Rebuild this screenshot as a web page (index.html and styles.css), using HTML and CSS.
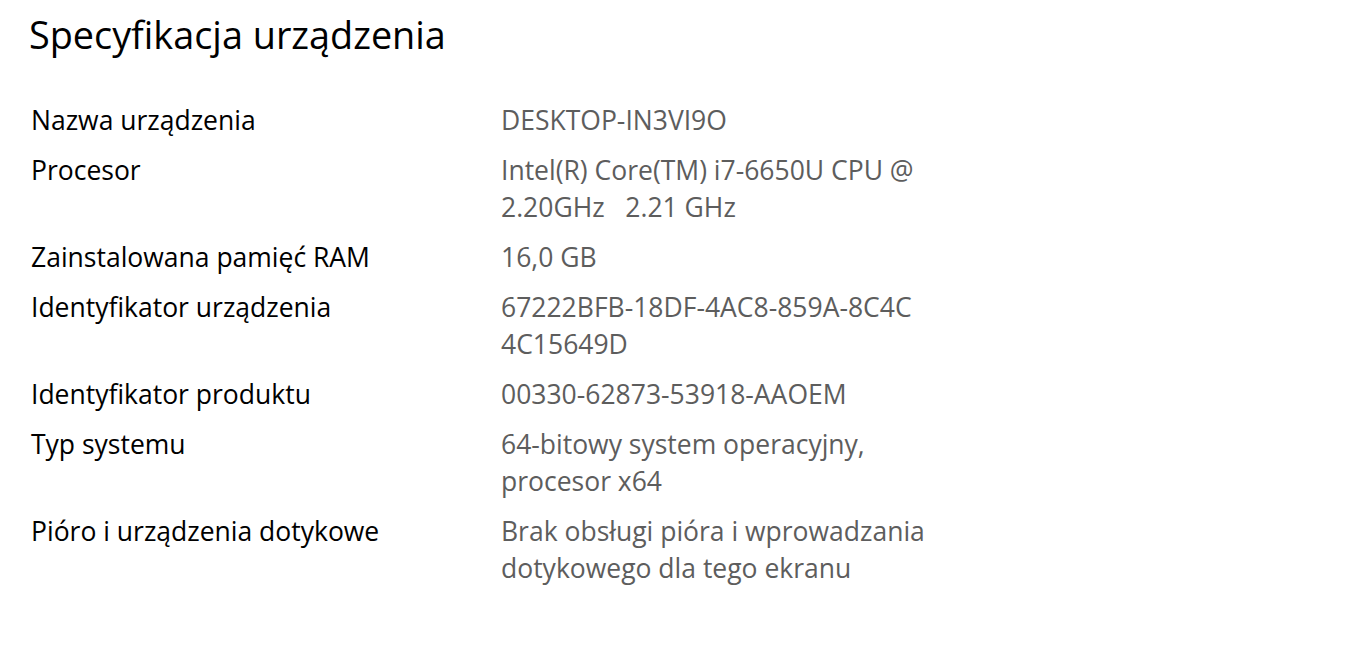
FILE: index.html
```html
<!DOCTYPE html>
<html lang="pl">
<head>
    <meta charset="UTF-8">
    <title>Specyfikacja urządzenia</title>
    <link rel="stylesheet" href="styles.css">
</head>
<body>
    <h1 class="title">Specyfikacja urządzenia</h1>

    <div class="specs">
        <div class="label">Nazwa urządzenia</div>
        <div class="value">DESKTOP-IN3VI9O</div>

        <div class="label">Procesor</div>
        <div class="value">Intel(R) Core(TM) i7-6650U CPU @<br>2.20GHz&nbsp;&nbsp;&nbsp;2.21 GHz</div>

        <div class="label">Zainstalowana pamięć RAM</div>
        <div class="value">16,0 GB</div>

        <div class="label">Identyfikator urządzenia</div>
        <div class="value">67222BFB-18DF-4AC8-859A-8C4C<br>4C15649D</div>

        <div class="label">Identyfikator produktu</div>
        <div class="value">00330-62873-53918-AAOEM</div>

        <div class="label">Typ systemu</div>
        <div class="value">64-bitowy system operacyjny,<br>procesor x64</div>

        <div class="label">Pióro i urządzenia dotykowe</div>
        <div class="value">Brak obsługi pióra i wprowadzania<br>dotykowego dla tego ekranu</div>
    </div>
</body>
</html>
```

FILE: styles.css
```css
body {
    margin: 0;
    background-color: #fff;
    font-family: "Open Sans", "Noto Sans", sans-serif;
    color: #000;
}

.title {
    margin: 0;
    padding: 11px 0 0 29px;
    font-size: 37.8px;
    font-weight: normal;
    line-height: 48px;
}

.specs {
    display: grid;
    grid-template-columns: 470px 1fr;
    row-gap: 13px;
    padding: 43px 0 0 31px;
    font-size: 26.5px;
    line-height: 37px;
}

.value {
    color: #5d5d5d;
}
```
